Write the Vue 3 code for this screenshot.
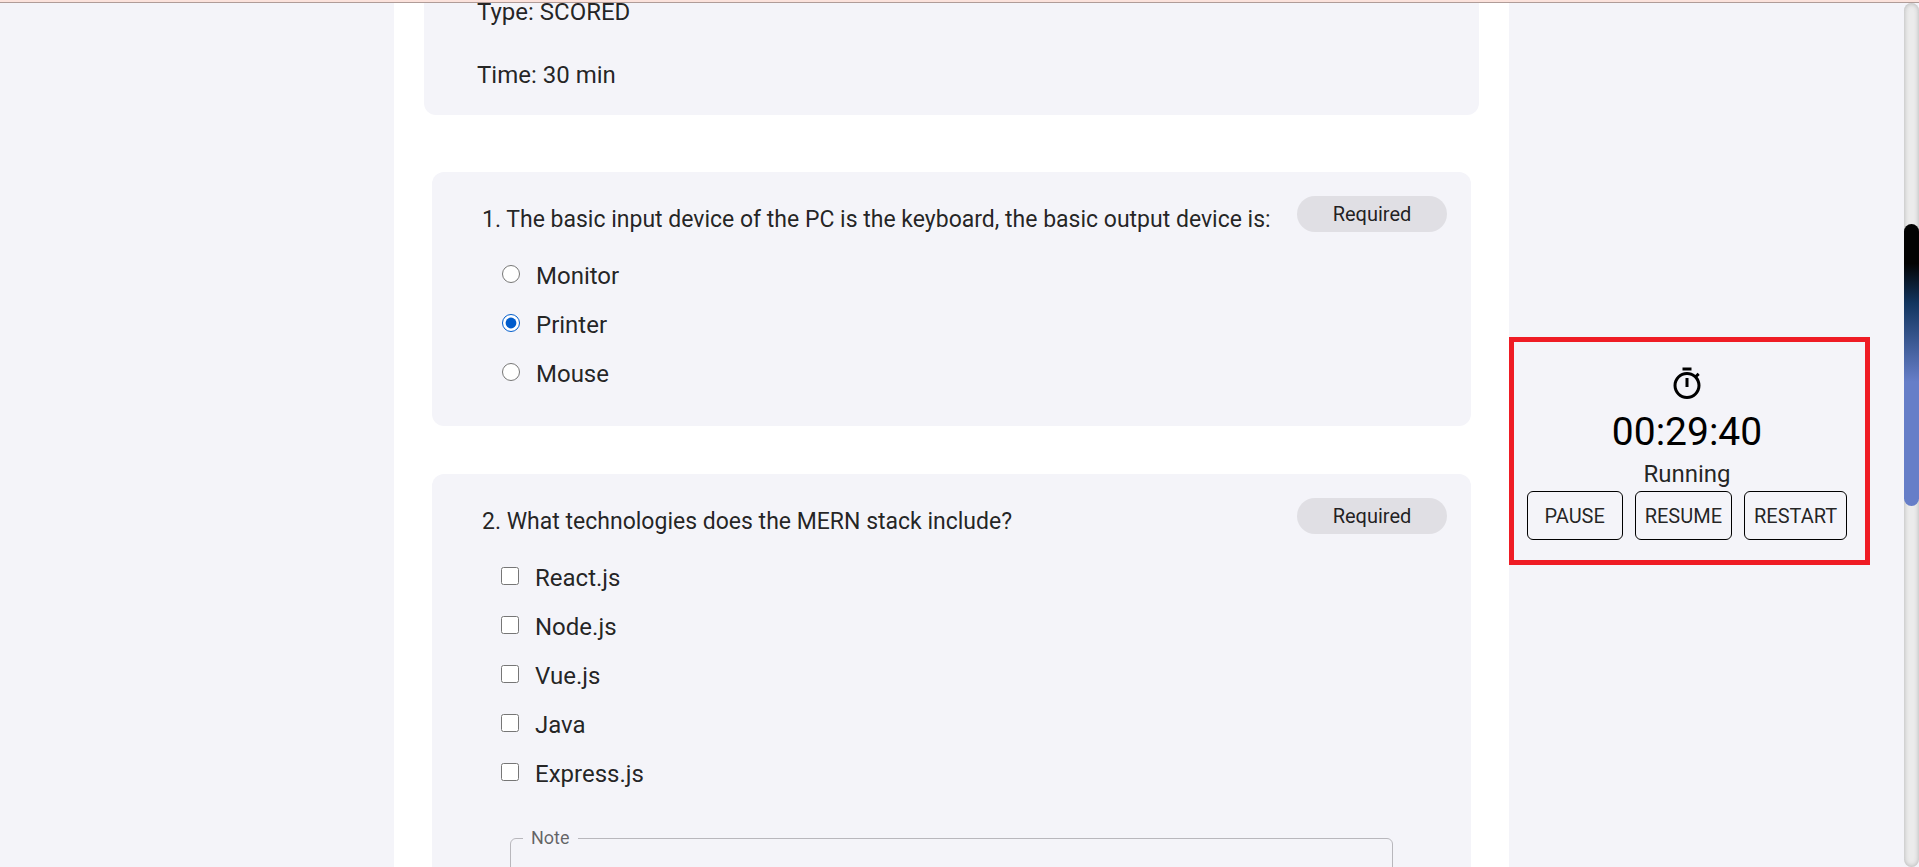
<script setup>
import { reactive, ref } from 'vue'

const details = ['Type: SCORED', 'Time: 30 min']

const questions = reactive([
  {
    id: 'q1',
    text: '1. The basic input device of the PC is the keyboard, the basic output device is:',
    type: 'radio',
    options: ['Monitor', 'Printer', 'Mouse'],
    answer: 'Printer',
    hasNote: false
  },
  {
    id: 'q2',
    text: '2. What technologies does the MERN stack include?',
    type: 'checkbox',
    options: ['React.js', 'Node.js', 'Vue.js', 'Java', 'Express.js'],
    answer: [],
    hasNote: true
  }
])

const note = ref('')
const status = ref('Running')
</script>

<template>
  <div class="page">
    <header class="topbar"></header>
    <div class="body">
      <main class="sheet">
        <section class="details">
          <p v-for="line in details" :key="line">{{ line }}</p>
        </section>

        <section v-for="q in questions" :key="q.id" class="question">
          <div class="question-head">
            <h2 :id="q.id">{{ q.text }}</h2>
            <span class="badge">Required</span>
          </div>
          <div class="options" :class="q.type" role="group" :aria-labelledby="q.id">
            <label v-for="option in q.options" :key="option" class="option">
              <input v-if="q.type === 'radio'" v-model="q.answer" type="radio" :name="q.id" :value="option" />
              <input v-else v-model="q.answer" type="checkbox" :value="option" />
              <span>{{ option }}</span>
            </label>
          </div>
          <fieldset v-if="q.hasNote" class="note">
            <legend><label for="note">Note</label></legend>
            <textarea id="note" v-model="note" rows="3"></textarea>
          </fieldset>
        </section>
      </main>

      <aside class="timer">
        <svg class="timer-icon" viewBox="0 0 24 24" aria-hidden="true">
          <path
            d="M15 1H9v2h6V1zm-4 13h2V8h-2v6zm8.03-6.61 1.42-1.42c-.43-.51-.9-.99-1.41-1.41l-1.42 1.42C16.07 4.74 14.12 4 12 4c-4.97 0-9 4.03-9 9s4.02 9 9 9 9-4.03 9-9c0-2.12-.74-4.07-1.97-5.61zM12 20c-3.87 0-7-3.13-7-7s3.13-7 7-7 7 3.13 7 7-3.13 7-7 7z"
          />
        </svg>
        <div class="time">00:29:40</div>
        <div class="status">{{ status }}</div>
        <div class="actions">
          <button type="button" @click="status = 'Not running'">PAUSE</button>
          <button type="button" @click="status = 'Running'">RESUME</button>
          <button type="button" @click="status = 'Running'">RESTART</button>
        </div>
      </aside>

      <div class="track"><div class="thumb"></div></div>
    </div>
  </div>
</template>

<style>
body {
  margin: 0;
  background: #f4f4f9;
}
</style>

<style scoped>
.page {
  display: flex;
  flex-direction: column;
  height: 100vh;
  overflow: hidden;
  background: #f4f4f9;
  color: rgba(0, 0, 0, 0.87);
  font-family: Roboto, "Liberation Sans", sans-serif;
  font-size: 24px;
  line-height: 28px;
}
.topbar {
  flex: none;
  height: 2px;
  background: #fbe2dc;
  border-bottom: 1px solid #b09c98;
}
.body {
  flex: 1;
  min-height: 0;
  display: grid;
  grid-template-columns: minmax(0, 394fr) minmax(0, 1115fr) minmax(0, 395fr) 15px;
  grid-template-rows: minmax(0, 1fr);
}
.sheet {
  grid-column: 2;
  overflow: hidden;
  padding: 0 30px;
  background: #fff;
}
.details {
  margin-top: -24px;
  padding: 19px 53px 26px;
  border-radius: 12px;
  background: #f4f4f9;
}
.details p {
  margin: 0 0 35px;
}
.details p:last-child {
  margin-bottom: 0;
}
.question {
  margin: 48px 8px 0;
  padding: 24px 24px 28px 50px;
  border-radius: 12px;
  background: #f4f4f9;
}
.details + .question {
  margin-top: 57px;
}
.question-head {
  display: flex;
  justify-content: space-between;
  align-items: flex-start;
  gap: 20px;
}
.question-head h2 {
  margin: 0;
  padding-top: 9px;
  font-size: 23px;
  font-weight: 400;
  line-height: 30px;
}
.badge {
  flex: none;
  width: 150px;
  border-radius: 18px;
  background: #e0dfe4;
  font-size: 20px;
  line-height: 36px;
  text-align: center;
}
.options {
  display: flex;
  flex-direction: column;
  align-items: flex-start;
  padding: 16px 0 0 20px;
}
.options.checkbox {
  padding-left: 19px;
}
.option {
  display: flex;
  align-items: center;
  gap: 16px;
  height: 49px;
}
.option input {
  width: 18px;
  height: 18px;
  margin: 0 0 4px;
  accent-color: #005ccc;
}
.note {
  margin: 28px 54px 0 28px;
  padding: 0 16px 12px;
  border: 1px solid #b8b7bc;
  border-radius: 6px;
}
.note legend {
  margin-left: -4px;
  padding: 0 8px;
  color: rgba(0, 0, 0, 0.6);
  font-size: 18px;
  line-height: 24px;
}
.note textarea {
  display: block;
  width: 100%;
  padding: 0;
  border: 0;
  outline: 0;
  resize: none;
  background: transparent;
  font: inherit;
}
.timer {
  grid-column: 3;
  align-self: start;
  margin: 334px 34px 0 0;
  padding: 24px 17px 20px 12px;
  border: 5px solid #ef1c25;
  color: #000;
  text-align: center;
}
.timer-icon {
  display: block;
  width: 36px;
  height: 36px;
  margin: 0 auto 5px;
}
.time {
  font-size: 39px;
  line-height: 50px;
}
.status {
  color: rgba(0, 0, 0, 0.87);
  line-height: 34px;
}
.actions {
  display: flex;
  justify-content: center;
  gap: 12px;
}
.actions button {
  min-width: 96px;
  height: 49px;
  padding: 0 9px;
  border: 1px solid #000;
  border-radius: 6px;
  background: transparent;
  color: rgba(0, 0, 0, 0.87);
  font: inherit;
  font-size: 20px;
}
.track {
  grid-column: 4;
  display: grid;
  grid-template-rows: 221fr 282fr 361fr;
  border-radius: 10px;
  background: #ebebeb;
  box-shadow: inset 0 0 5px #b0b0b0;
}
.thumb {
  grid-row: 2;
  border-radius: 10px;
  background: linear-gradient(#030303 0%, #030303 14%, #12355f 28%, #667ec8 56%, #667ec8 100%);
}
</style>
